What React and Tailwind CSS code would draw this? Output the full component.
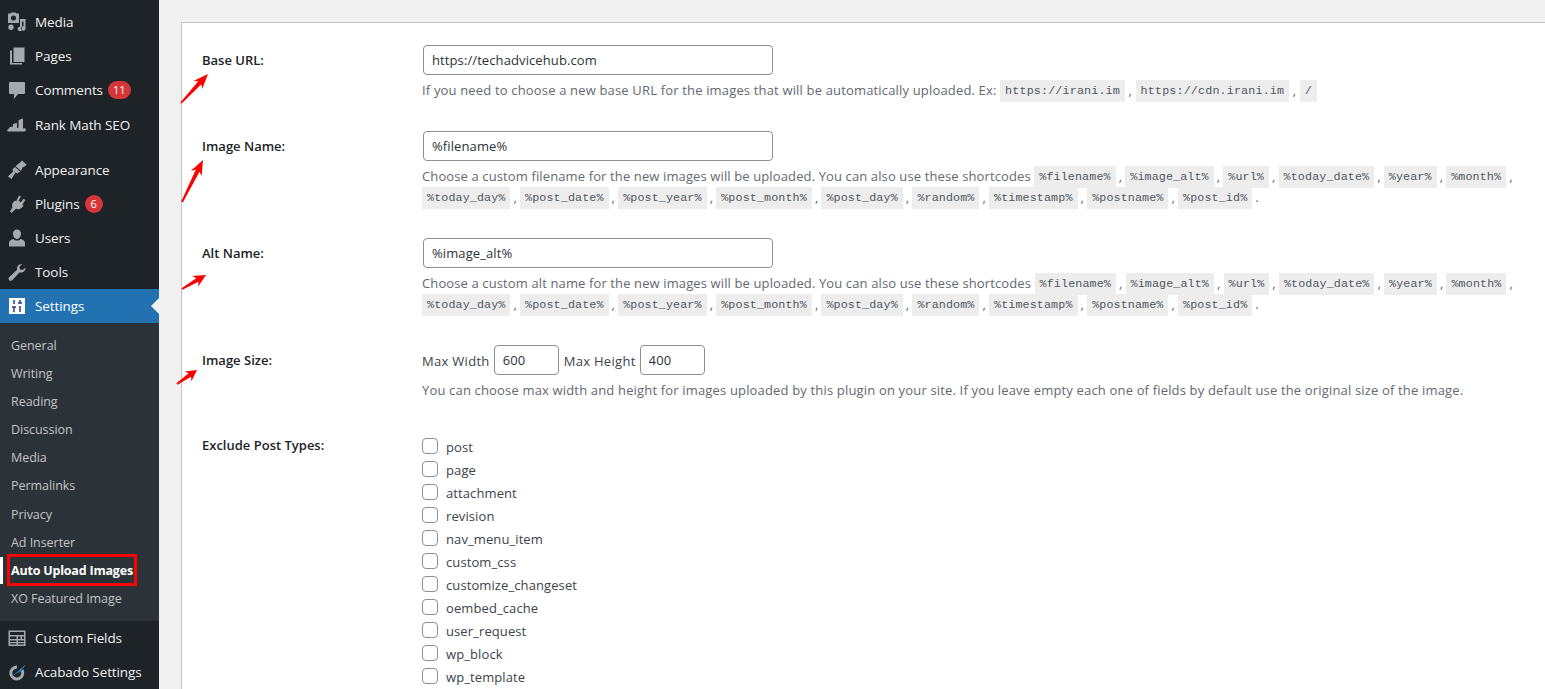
import { Fragment } from 'react';

const sans = "font-['Open_Sans',sans-serif]";

const shortcodes = [
  ['%filename%', '%image_alt%', '%url%', '%today_date%', '%year%', '%month%'],
  ['%today_day%', '%post_date%', '%post_year%', '%post_month%', '%post_day%', '%random%', '%timestamp%', '%postname%', '%post_id%'],
];

const postTypes = ['post', 'page', 'attachment', 'revision', 'nav_menu_item', 'custom_css', 'customize_changeset', 'oembed_cache', 'user_request', 'wp_block', 'wp_template'];

const subItems = ['General', 'Writing', 'Reading', 'Discussion', 'Media', 'Permalinks', 'Privacy', 'Ad Inserter'];

// Menu icons, drawn on a 20x20 box
const icons = {
  media: (
    <path fillRule="evenodd" d="M1 1.500h2.500l1-1h4l1 1H12v9.500H1V1.500zm5.500 2a2.500 2.500 0 1 0 0 5 2.500 2.500 0 0 0 0-5zM13 7h5.500v9.500a2.200 2.200 0 1 1-2-2.200V9.500H15v7.500a2.200 2.200 0 1 1-2-2.200V7zM4 12.500a2.700 2.700 0 1 1 0 5.400 2.700 2.700 0 0 1 0-5.400z" />
  ),
  pages: <path fillRule="evenodd" d="M6.500 1.500H17.500V16H6.500V1.500zM3 4.500h2V17h10v1.500H3V4.500z" />,
  comments: <path d="M3 2h14a1 1 0 0 1 1 1v10a1 1 0 0 1-1 1h-6l-4 5v-5H3a1 1 0 0 1-1-1V3a1 1 0 0 1 1-1z" />,
  rank: <path d="M0 15.500l3-3.500 3-.5V9l4-1v5l1.500-.5V5.500l3.500-2 1 .5v9.500l2-.5 1 2.500-1.500 1H1L0 15.500z" />,
  appearance: <path d="M12.500 3L15 .5l4.500 4-1 1.500-3 1.500-1.500 3.500L8.500 6l4-3zM8 7l5 4.500-2.500 2-2-1L4.500 19 1 16.500l5-5-.5-2.500L8 7z" />,
  plugins: <path d="M12 1.500l2 1.200-2.500 3.800 2.500 1.800 2.500-3.600 2 1.300-3 4.300 1 1.700-2 2c-2 1.500-4 1.500-5.500.8L4.500 19 3 17.500l2.500-4.500c-.8-1.500-.5-3 .5-4.500l2-2 1.200.8L12 1.500z" />,
  users: <path d="M10 1.500a4 4 0 0 1 4 4.500c0 2.500-2 5-4 5s-4-2.500-4-5a4 4 0 0 1 4-4.500zM6.500 11c1 1 2.200 1.500 3.500 1.500s2.500-.5 3.500-1.500c2.500.5 4.500 2 4.500 4v3.500H2V15c0-2 2-3.500 4.500-4z" />,
  tools: <path d="M18.500 5.500c.3 2-1 4.500-3.500 5-1 .2-1.700 0-2.300-.2L5.500 18c-1 1-2.500 1-3.300.2-.9-.9-.9-2.300.1-3.200l7.800-7.200c-.2-.7-.2-1.500 0-2.300.6-2.500 3-3.800 5-3.500l-2.600 2.800.5 2.600 2.600.6 2.900-2.500z" />,
  fields: <path fillRule="evenodd" d="M1.500 2.500h17v15.500h-17V2.500zM3 4v3h14V4H3zm0 4.500V11h6.500V8.500H3zm8 0V11h2.500V8.500H11zm4 0V11h2V8.500h-2zM3 12.500v1.500h6.500v-1.500H3zm8 0v1.500h6v-1.500h-6zM3 15.200v1.300h6.500v-1.300H3zm8 0v1.300h6v-1.300h-6z" />,
};

function MenuIcon({ name }) {
  return (
    <svg viewBox="0 0 20 20" className="w-[20px] h-[20px] shrink-0 fill-[#a7aaad]">
      {icons[name]}
    </svg>
  );
}

function SettingsIcon() {
  return (
    <svg viewBox="0 0 16 16" className="w-[16px] h-[16px] shrink-0 ml-[2px] mr-[2px]">
      <rect width="16" height="16" fill="#fff" />
      <path d="M5 2v4M5 9v5M3 9h4M11 2v3M11 8v6M9 5h4" stroke="#2c3a8c" strokeWidth="1.500" fill="none" />
    </svg>
  );
}

function AcabadoIcon() {
  return (
    <svg viewBox="0 0 20 20" className="w-[20px] h-[20px] shrink-0">
      <path d="M15 8a6 6 0 1 1-5-3" stroke="#a7aaad" strokeWidth="3" fill="none" />
      <path d="M3 16L19 2l-5 8-4 1-7 5z" fill="#2271b1" />
    </svg>
  );
}

function MenuRow({ icon, label, badge, active }) {
  return (
    <div className={`relative flex items-center h-[34px] pl-[7px] ${active ? 'bg-[#2271b1] text-white' : 'text-[#f0f0f1]'}`}>
      {icon === 'settings' ? <SettingsIcon /> : icon === 'acabado' ? <AcabadoIcon /> : <MenuIcon name={icon} />}
      <span className="ml-[8px] text-[13.5px] tracking-[-0.1px] whitespace-nowrap">{label}</span>
      {badge && (
        <span className="ml-[5px] min-w-[18px] h-[18px] px-[5px] rounded-full bg-[#d63638] text-white text-[11px] leading-[18px] text-center">
          {badge}
        </span>
      )}
      {active && (
        <span className="absolute right-0 top-[9px] w-0 h-0 border-y-[8px] border-y-transparent border-r-[8px] border-r-[#f0f0f1]" />
      )}
    </div>
  );
}

function Sidebar() {
  return (
    <aside className="w-[159px] shrink-0 bg-[#1d2327] pt-[5px]">
      <MenuRow icon="media" label="Media" />
      <MenuRow icon="pages" label="Pages" />
      <MenuRow icon="comments" label="Comments" badge="11" />
      <div className="mt-[1px] mb-[11px]">
        <MenuRow icon="rank" label="Rank Math SEO" />
      </div>
      <MenuRow icon="appearance" label="Appearance" />
      <MenuRow icon="plugins" label="Plugins" badge="6" />
      <MenuRow icon="users" label="Users" />
      <MenuRow icon="tools" label="Tools" />
      <MenuRow icon="settings" label="Settings" active />
      <div className="bg-[#2c3338] pt-[8.5px] pb-[7.5px] text-[12.5px] tracking-[-0.05px] text-[#c3c4c7]">
        {subItems.map((item) => (
          <div key={item} className="h-[28.2px] leading-[28.2px] pl-[11px]">{item}</div>
        ))}
        <div className="relative h-[28.2px] leading-[28.2px] pl-[11px] font-bold tracking-[-0.2px] text-white whitespace-nowrap">
          Auto Upload Images
          <span className="absolute left-0 top-0 w-[3px] h-[27px] bg-white" />
          <span className="absolute left-[7px] -top-[3px] w-[130px] h-[32px] border-[3px] border-[#f00]" />
        </div>
        <div className="h-[28.2px] leading-[28.2px] pl-[11px]">XO Featured Image</div>
      </div>
      <MenuRow icon="fields" label="Custom Fields" />
      <MenuRow icon="acabado" label="Acabado Settings" />
    </aside>
  );
}

function Code({ children }) {
  return (
    <code className="bg-[#ededed] text-[#50575e] px-[5px] py-[4px] leading-none align-[1px] font-['Liberation_Mono',monospace] text-[11.7px]">
      {children}
    </code>
  );
}

function Help({ tracking = 'tracking-[0.165px]', children }) {
  return <p className={`mt-[5px] text-[13px] ${tracking} leading-[21px] text-[#646970] w-[1110px]`}>{children}</p>;
}

function TextInput({ value, className }) {
  return (
    <input
      readOnly
      value={value}
      className={`h-[30px] border border-[#8c8f94] rounded-[4px] bg-white px-[8px] text-[13px] tracking-[0.1px] text-[#2c3338] ${className}`}
    />
  );
}

function Row({ label, labelPad = 'pt-[5px]', children }) {
  return (
    <div className="flex pl-[20px]">
      <div className={`w-[220px] shrink-0 ${labelPad} leading-[20px] text-[13px] tracking-[0px] font-semibold text-[#1d2327]`}>{label}</div>
      <div>{children}</div>
    </div>
  );
}

function ShortcodeHelp({ intro }) {
  return (
    <Help tracking="tracking-[0.12px]">
      {intro}{' '}
      {shortcodes.map((line, i) => (
        <span key={i} className="[word-spacing:-0.45px]">
          {line.map((code, j) => (
            <Fragment key={code}>
              <Code>{code}</Code>
              {j === line.length - 1 && i === 1 ? ' .' : ' , '}
            </Fragment>
          ))}
          {i === 0 && <br />}
        </span>
      ))}
    </Help>
  );
}

function Arrow({ x1, y1, x2, y2 }) {
  // tapered line from tail to head, with a barbed head
  const len = Math.hypot(x2 - x1, y2 - y1);
  const ux = (x2 - x1) / len;
  const uy = (y2 - y1) / len;
  const at = (along, side) => `${x2 - ux * along - uy * side},${y2 - uy * along + ux * side}`;
  const back = Math.min(len * 0.45, 15);
  const points = [
    `${x1 - uy * 0.9},${y1 + ux * 0.9}`,
    at(back * 0.8, 2.1),
    at(back, 6),
    at(0, 0),
    at(back, -6),
    at(back * 0.8, -2.1),
    `${x1 + uy * 0.9},${y1 - ux * 0.9}`,
  ].join(' ');
  return <polygon points={points} fill="#f00" />;
}

function Arrows() {
  return (
    <svg className="absolute left-0 top-0 w-[260px] h-[400px] pointer-events-none" viewBox="0 0 260 400">
      <Arrow x1={181} y1={103} x2={208} y2={74} />
      <Arrow x1={182} y1={202} x2={203} y2={160} />
      <Arrow x1={182} y1={289} x2={206} y2={275} />
      <Arrow x1={177} y1={384} x2={197} y2={370} />
    </svg>
  );
}

export default function App() {
  return (
    <div className={`relative flex h-[689px] overflow-hidden bg-[#f0f0f0] ${sans}`}>
      <Sidebar />
      <main className="flex-1 pl-[22px] pt-[22px]">
        <div className="h-[700px] bg-white border-l border-t border-[#c3c4c7] pt-[22px] flex flex-col gap-[30px]">
          <Row label="Base URL:">
            <TextInput value="https://techadvicehub.com" className="w-[350px] ml-[1px] block" />
            <Help>
              If you need to choose a new base URL for the images that will be automatically uploaded. Ex:{' '}
              <Code>https://irani.im</Code> , <Code>https://cdn.irani.im</Code> , <Code>/</Code>
            </Help>
          </Row>
          <Row label="Image Name:">
            <TextInput value="%filename%" className="w-[350px] ml-[1px] block" />
            <ShortcodeHelp intro="Choose a custom filename for the new images will be uploaded. You can also use these shortcodes" />
          </Row>
          <Row label="Alt Name:">
            <TextInput value="%image_alt%" className="w-[350px] ml-[1px] block" />
            <ShortcodeHelp intro="Choose a custom alt name for the new images will be uploaded. You can also use these shortcodes" />
          </Row>
          <Row label="Image Size:">
            <div className="flex items-center text-[13px] tracking-[0.3px] text-[#3c434a]">
              <span className="pt-[3px]">Max Width</span>
              <TextInput value="600" className="w-[65px] ml-[4px] mr-[5px]" />
              <span className="pt-[3px]">Max Height</span>
              <TextInput value="400" className="w-[65px] ml-[4px]" />
            </div>
            <Help>
              You can choose max width and height for images uploaded by this plugin on your site. If you leave empty each one of fields by default use the original size of the image.
            </Help>
          </Row>
          <Row label="Exclude Post Types:" labelPad="pt-[4px]">
            <div className="pt-[3.500px]">
              {postTypes.map((type) => (
                <label key={type} className="flex items-center h-[23px] text-[13px] tracking-[0.1px] text-[#3c434a]">
                  <span className="w-[16px] h-[16px] border border-[#8c8f94] rounded-[4px] bg-white mr-[8px]" />
                  <span className="pt-[4px]">{type}</span>
                </label>
              ))}
            </div>
          </Row>
        </div>
      </main>
      <Arrows />
    </div>
  );
}
